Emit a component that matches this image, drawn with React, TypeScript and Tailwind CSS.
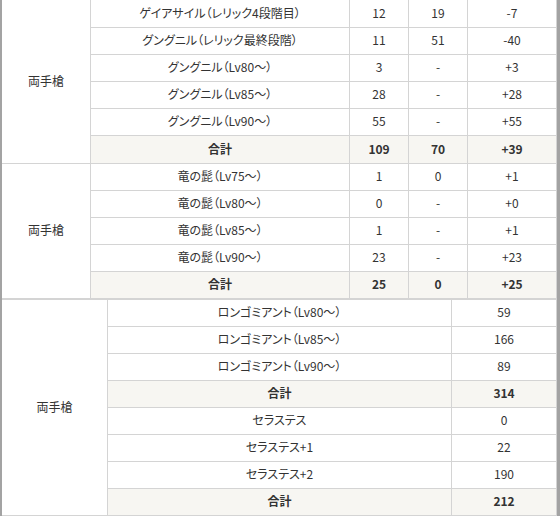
import React from "react";

const FONT = "[font-family:'Noto_Sans_CJK_JP',sans-serif] [font-feature-settings:'palt']";

function Cell({ children, className = "" }: { children?: React.ReactNode; className?: string }) {
  return (
    <div
      className={`flex items-center justify-center pb-[2px] border-r border-b border-[#d4d4d4] text-[12px] leading-none text-[#333] ${className}`}
    >
      {children}
    </div>
  );
}

type Row = [string, string, string, string];

function FourColTable({ rows, total, first }: { rows: Row[]; total: [string, string, string]; first?: boolean }) {
  const rowsClass = first
    ? "grid-rows-[28px_27px_27px_27px_27px_28px]"
    : "grid-rows-[27px_27px_27px_27px_27px]";
  const spanClass = first ? "row-span-6" : "row-span-5";
  return (
    <div className={`grid grid-cols-[89px_259px_59px_59px_89px] ${rowsClass}`}>
      <Cell className={spanClass}>両手槍</Cell>
      {rows.map((r, i) => (
        <React.Fragment key={i}>
          <Cell>{r[0]}</Cell>
          <Cell>{r[1]}</Cell>
          <Cell>{r[2]}</Cell>
          <Cell>{r[3]}</Cell>
        </React.Fragment>
      ))}
      <Cell className="bg-[#f7f6f2] font-bold">合計</Cell>
      <Cell className="bg-[#f7f6f2] font-bold">{total[0]}</Cell>
      <Cell className="bg-[#f7f6f2] font-bold">{total[1]}</Cell>
      <Cell className="bg-[#f7f6f2] font-bold">{total[2]}</Cell>
    </div>
  );
}

export default function App() {
  const a: Row[] = [
    ["ゲイアサイル（レリック4段階目）", "12", "19", "-7"],
    ["グングニル（レリック最終段階）", "11", "51", "-40"],
    ["グングニル（Lv80～）", "3", "-", "+3"],
    ["グングニル（Lv85～）", "28", "-", "+28"],
    ["グングニル（Lv90～）", "55", "-", "+55"],
  ];
  const b: Row[] = [
    ["竜の髭（Lv75～）", "1", "0", "+1"],
    ["竜の髭（Lv80～）", "0", "-", "+0"],
    ["竜の髭（Lv85～）", "1", "-", "+1"],
    ["竜の髭（Lv90～）", "23", "-", "+23"],
  ];
  const c: [string, string, boolean][] = [
    ["ロンゴミアント（Lv80～）", "59", false],
    ["ロンゴミアント（Lv85～）", "166", false],
    ["ロンゴミアント（Lv90～）", "89", false],
    ["合計", "314", true],
    ["セラステス", "0", false],
    ["セラステス+1", "22", false],
    ["セラステス+2", "190", false],
    ["合計", "212", true],
  ];
  return (
    <div className={`w-[560px] h-[516px] overflow-hidden bg-white border-l-2 border-r-[3px] border-[#a3a3a3] ${FONT}`}>
      <FourColTable rows={a} total={["109", "70", "+39"]} first />
      <FourColTable rows={b} total={["25", "0", "+25"]} />
      <div className="grid grid-cols-[106px_344px_105px] grid-rows-[repeat(8,27px)] border-t border-[#d4d4d4]">
        <Cell className="row-span-8">両手槍</Cell>
        {c.map(([name, val, tot], i) => (
          <React.Fragment key={i}>
            <Cell className={tot ? "bg-[#f7f6f2] font-bold" : ""}>{name}</Cell>
            <Cell className={tot ? "bg-[#f7f6f2] font-bold" : ""}>{val}</Cell>
          </React.Fragment>
        ))}
      </div>
    </div>
  );
}
